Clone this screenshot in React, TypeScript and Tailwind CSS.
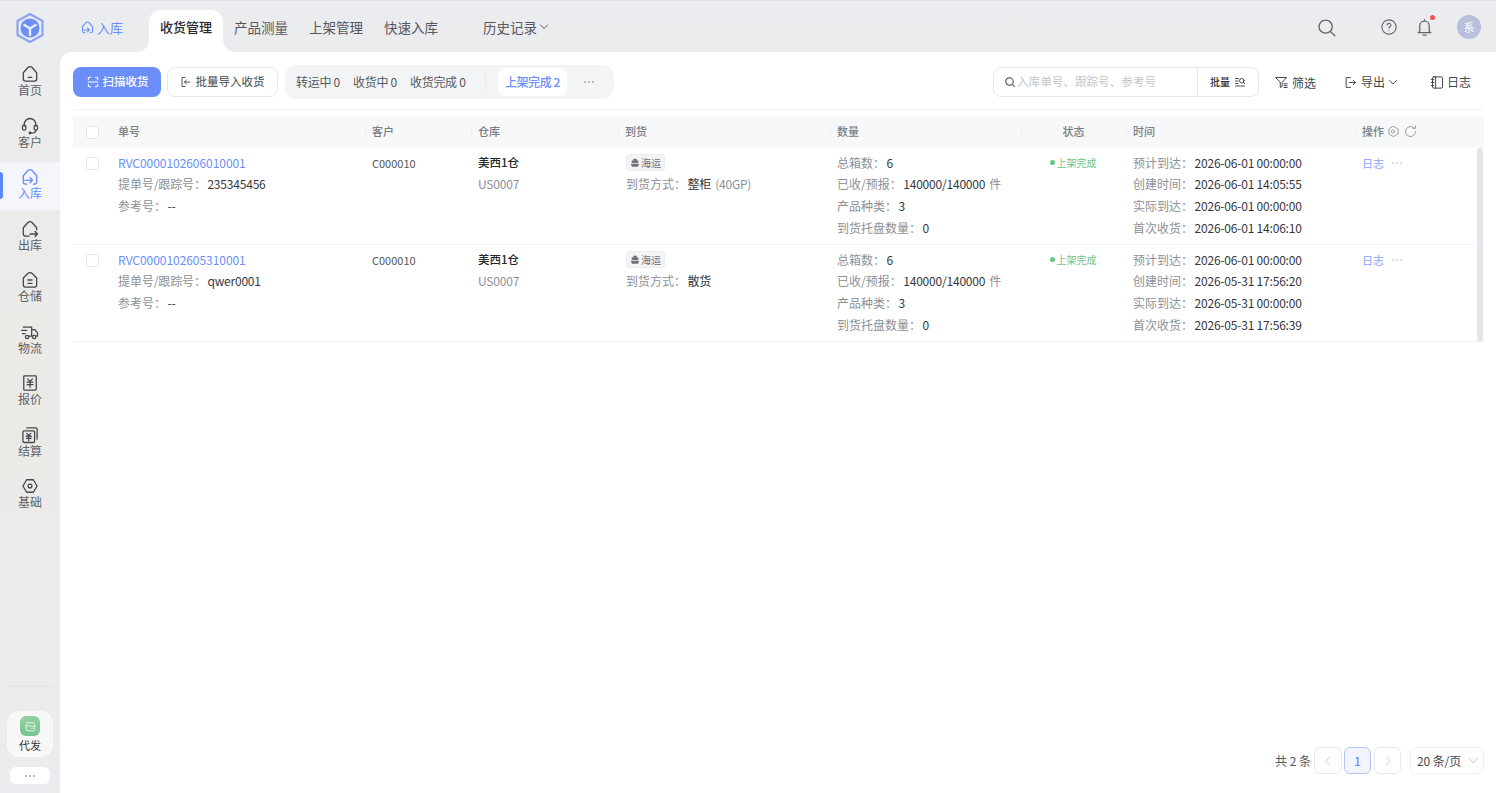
import React from "react";

const S = (p: { s?: number; w?: number; c?: string; children: React.ReactNode; vb?: string }) => (
  <svg width={p.s ?? 16} height={p.s ?? 16} viewBox={p.vb ?? "0 0 24 24"} fill="none" stroke={p.c ?? "currentColor"} strokeWidth={p.w ?? 1.8} strokeLinecap="round" strokeLinejoin="round" className="shrink-0">
    {p.children}
  </svg>
);

const Dots = ({ c = "#7d8085" }: { c?: string }) => (
  <svg width="10" height="4" viewBox="0 0 10 4" fill={c} className="shrink-0">
    <circle cx="1" cy="2" r="0.8" /><circle cx="5" cy="2" r="0.8" /><circle cx="9" cy="2" r="0.8" />
  </svg>
);

const navItems: { label: string; active?: boolean; icon: React.ReactNode }[] = [
  { label: "首页", icon: <S s={20} w={1.55}><path d="M4 10.500 9.500 4.200a3.400 3.400 0 0 1 5 0l5.500 6.300V18a2.500 2.500 0 0 1-2.500 2.500h-11A2.500 2.500 0 0 1 4 18z" /><path d="M10 16h4" /></S> },
  { label: "客户", icon: <S s={20} w={1.55}><path d="M5 12V10a7 7 0 0 1 14 0v2" /><rect x="3" y="11" width="4" height="6" rx="2" /><rect x="17" y="11" width="4" height="6" rx="2" /><path d="M19 17c0 2.300-2.500 3.500-5.500 3.500" /><circle cx="12" cy="20.500" r="1" /></S> },
  { label: "入库", active: true, icon: <S s={20} w={1.7}><path d="M8 20.500H6.500A2.500 2.500 0 0 1 4 18v-7.500l5.500-6.300a3.400 3.400 0 0 1 5 0l5.500 6.300V18a2.500 2.500 0 0 1-2.500 2.500H16" /><path d="M6 16h9M12 13l3 3-3 3" /></S> },
  { label: "出库", icon: <S s={20} w={1.55}><path d="M11 20.500H6.500A2.500 2.500 0 0 1 4 18v-7.500l5.500-6.300a3.400 3.400 0 0 1 5 0l5.500 6.300V13" /><path d="M12 18h9M18 15l3 3-3 3" /></S> },
  { label: "仓储", icon: <S s={20} w={1.55}><path d="M4 9.500 9 4.600a4 4 0 0 1 6 0l5 4.900V18a2.500 2.500 0 0 1-2.500 2.500h-11A2.500 2.500 0 0 1 4 18z" /><path d="M9.500 12h5M9.500 16h5" /></S> },
  { label: "物流", icon: <S s={20} w={1.5}><path d="M4 6h10v11h-3M14 9h3.500l3.500 4v4h-2M2 10h6M3 14h3" /><circle cx="8.500" cy="18" r="2" /><circle cx="17" cy="18" r="2" /></S> },
  { label: "报价", icon: <S s={20} w={1.55}><rect x="4.500" y="3.500" width="15" height="17" rx="1" /><path d="m9 7 3 3 3-3M8.500 11h7M8.500 14h7M12 10v7" /></S> },
  { label: "结算", icon: <S s={20} w={1.55}><path d="M8 3.500h11a1.500 1.500 0 0 1 1.500 1.500v12" /><rect x="3.500" y="7" width="14" height="14" rx="1.500" /><path d="m8 10 2.500 2.500L13 10M7.500 13.500h6M7.500 16h6M10.500 12.500V19" /></S> },
  { label: "基础", icon: <S s={20} w={1.55}><path d="M8 4.500h8l4.500 7.500-4.500 7.500H8L3.500 12z" /><circle cx="12" cy="12" r="2.300" /></S> },
];

function Sidebar() {
  return (
    <aside className="flex h-full w-[60px] shrink-0 flex-col">
      <div className="flex h-[58px] shrink-0 items-start justify-center pt-[11px]">
        <svg width="30" height="32" viewBox="0 0 30 32" fill="none">
          <path d="M15 2 27.500 9v14L15 30 2.500 23V9z" stroke="#8aa5f6" strokeWidth="2.200" strokeLinejoin="round" />
          <circle cx="15" cy="16" r="9.500" fill="#6c8ff5" />
          <path d="M15 16.500V24M15 16.500 8.500 12.500M15 16.500l6.500-4" stroke="#e9ecf6" strokeWidth="2.400" />
        </svg>
      </div>
      <nav className="flex flex-col gap-[3.5px]">
        {navItems.map((n) => (
          <div key={n.label} className={`relative flex h-[48px] flex-col items-center pt-[5px] text-xs leading-4 ${n.active ? "bg-[#f5f6fb] text-[#6a8efb]" : "text-[#5f6267]"}`}>
            {n.active && <span className="absolute left-0 top-[10px] h-[27px] w-[3px] rounded-r bg-[#5f85fb]" />}
            <span className={n.active ? "" : "text-[#44474c]"}>{n.icon}</span>
            <span className="-mt-[2px]">{n.label}</span>
          </div>
        ))}
      </nav>
      <div className="mt-auto flex flex-col items-center pb-[9px]">
        <div className="mb-[24px] h-px w-[46px] bg-[#e3e3e0]" />
        <div className="flex h-[46px] w-[46px] flex-col items-center rounded-xl bg-[#f8f8f8] pt-[5px]">
          <span className="flex h-5 w-5 items-center justify-center rounded-md bg-gradient-to-b from-[#8fd3a0] to-[#76c48d]">
            <S s={13} c="#eaf7ee" w={1.7}><rect x="4" y="5" width="16" height="15" rx="3" /><path d="M4 11h16M14 15h3" /></S>
          </span>
          <span className="mt-0 text-[11px] leading-[18px] text-[#33363c]">代发</span>
        </div>
        <div className="mt-[10px] flex h-[17px] w-10 items-center justify-center rounded-md bg-white"><Dots c="#666a70" /></div>
      </div>
    </aside>
  );
}

function TopBar() {
  const tabs = ["产品测量", "上架管理", "快速入库"];
  return (
    <header className="flex h-[51px] shrink-0 items-end pr-[15px] text-[13.5px]">
      <div className="mb-[15px] ml-[20px] flex w-[69px] items-center gap-[2px] text-[13px] text-[#6a8efb]">
        <S s={15} w={1.7}><path d="M8 20.500H6.500A2.500 2.500 0 0 1 4 18v-7.500l5.500-6.300a3.400 3.400 0 0 1 5 0l5.500 6.300V18a2.500 2.500 0 0 1-2.500 2.500H16" /><path d="M6 16h9M12 13l3 3-3 3" /></S>
        <span>入库</span>
      </div>
      <div className="relative flex h-[42px] w-[74px] items-center justify-center rounded-t-xl bg-white pb-[8px] text-[13px] font-medium text-[#26282c]">
        <span className="absolute -left-3 bottom-0 h-3 w-3 bg-white"><span className="block h-3 w-3 rounded-br-xl bg-[#ebecef]" /></span>
        <span className="absolute -right-3 bottom-0 h-3 w-3 bg-white"><span className="block h-3 w-3 rounded-bl-xl bg-[#ebecef]" /></span>
        收货管理
      </div>
      <div className="ml-[11px] flex h-[42px] items-center gap-[21px] whitespace-nowrap pb-[8px] text-[#55585d]">
        {tabs.map((t) => <span key={t}>{t}</span>)}
        <span className="ml-[24px] flex items-center gap-[1px]">历史记录
          <S s={12} w={2}><path d="m5 8 7 7 7-7" /></S>
        </span>
      </div>
      <div className="mb-[13px] ml-auto flex items-center text-[#63666b]">
        <S s={21} w={1.55}><circle cx="11" cy="11" r="7.500" /><path d="m17 17 4.500 4.500" /></S>
        <span className="ml-[43px]"><S s={18} w={1.5}><circle cx="12" cy="12" r="9.500" /><path d="M9.500 9.500a2.500 2.500 0 1 1 3.600 2.200c-.8.500-1.100 1-1.100 1.800M12 17h.01" /></S></span>
        <span className="relative ml-[17px]">
          <S s={19} w={1.6}><path d="M6 17V10a6 6 0 0 1 12 0v7l2 1.500H4zM10 21.500h4M12 2v2" /></S>
          <span className="absolute -right-px -top-[3px] h-[5px] w-[5px] rounded-full bg-[#f0544f]" />
        </span>
        <span className="ml-[23px] flex h-6 w-6 items-center justify-center rounded-full bg-[#b9bfdb] text-[11px] text-white">系</span>
      </div>
    </header>
  );
}

function Toolbar() {
  return (
    <div className="flex h-[43px] shrink-0 items-start whitespace-nowrap border-b border-[#f3f4f6] text-xs">
      <button className="flex h-[30px] w-[88px] shrink-0 items-center justify-center gap-[3px] rounded-lg bg-[#6b8efb] text-[11.5px] font-medium text-white">
        <S s={14} w={1.8}><path d="M4 8V6a2 2 0 0 1 2-2h2M16 4h2a2 2 0 0 1 2 2v2M20 16v2a2 2 0 0 1-2 2h-2M8 20H6a2 2 0 0 1-2-2v-2M4 12h16" /></S>
        扫描收货
      </button>
      <button className="ml-[6px] flex h-[30px] w-[111px] shrink-0 items-center justify-center gap-[4px] rounded-lg border border-[#e7e8eb] pr-[1px] text-[11.5px] text-[#44474c]">
        <S s={12} w={1.8}><path d="M10 3H4v18h6M20 12H9M13 8l-4 4 4 4" /></S>
        批量导入收货
      </button>
      <div className="-mt-[2px] ml-[7px] flex h-[34px] w-[329px] shrink-0 items-center rounded-xl bg-[#f3f4f6] pl-[11px] text-[#55585d]">
        <span className="w-[43px] tracking-[-0.3px]">转运中 0</span>
        <span className="ml-[14px] w-[43px] tracking-[-0.3px]">收货中 0</span>
        <span className="ml-[14px] w-[55px] tracking-[-0.3px]">收货完成 0</span>
        <span className="ml-[20px] h-[18px] w-px bg-[#e8e9ec]" />
        <span className="ml-[12px] flex h-[28px] w-[69px] items-center justify-center rounded-lg bg-white font-medium tracking-[-0.4px] text-[#6a8efb]">上架完成 2</span>
        <span className="ml-[17px]"><Dots c="#74777c" /></span>
      </div>
      <div className="ml-auto flex h-[30px] w-[266px] shrink-0 items-center rounded-lg border border-[#e7e8eb]">
        <span className="ml-[10px] text-[#44474c]"><S s={12} w={2.1}><circle cx="11" cy="11" r="7.500" /><path d="m17 17 4 4" /></S></span>
        <span className="w-[181px] pl-[1px] text-[11.6px] text-[#c4c6cb]">入库单号、跟踪号、参考号</span>
        <span className="flex h-full flex-1 items-center justify-center gap-[4px] border-l border-[#e7e8eb] text-[10px] font-medium text-[#2e3035]">批量
          <S s={12} w={1.7}><path d="M3 5h6M3 10h5M3 15h5M3 20h18" /><circle cx="15.500" cy="9.500" r="4.500" /><path d="m19 13 2.500 2.500" /></S>
        </span>
      </div>
      <div className="ml-[15px] flex h-[30px] items-center gap-[3px] text-[#44474c]">
        <S s={15} w={1.6}><path d="M3 4h17l-7 8v6l-3 2v-8zM16 14h5M16 17h5M16 20h5" /></S>
        <span className="mt-px">筛选</span>
      </div>
      <div className="ml-[28px] flex h-[30px] items-center gap-[4px] text-[#44474c]">
        <S s={13} w={1.8}><path d="M12 3H4v18h8M10 12h11M17 8l4 4-4 4" /></S>
        <span>导出</span>
        <span className="-ml-[2px]"><S s={12} w={1.8}><path d="m5 9 7 7 7-7" /></S></span>
      </div>
      <div className="ml-[31px] mr-[13px] flex h-[30px] items-center gap-[2px] text-[#44474c]">
        <S s={15} w={1.6}><rect x="4" y="3" width="16" height="18" rx="2" /><path d="M9 3v18M2 7h4M2 12h4M2 17h4" /></S>
        <span>日志</span>
      </div>
    </div>
  );
}

const cols = "grid grid-cols-[37px_255px_106px_147px_212px_191px_105px_229px_129px]";

function Head({ t, center, children }: { t: string; center?: boolean; children?: React.ReactNode }) {
  return (
    <div className={`relative flex items-center pb-[2px] font-medium text-[#7a7d82] ${center ? "justify-center" : "pl-[7px]"}`}>
      <span className="absolute left-0 top-[9px] h-[14px] w-px bg-[#eff0f3]" />
      <span>{t}</span>
      {children}
    </div>
  );
}

const Checkbox = () => <span className="block h-[13px] w-[13px] rounded-[3px] border border-[#e7e8eb] bg-white" />;

const Line = ({ l, v, extra, tight }: { l: string; v: string; extra?: string; tight?: boolean }) => (
  <div className="flex h-[21.67px] items-center whitespace-nowrap">
    <span className={`text-[#8d9096] ${tight ? "tracking-[-0.1px]" : ""}`}>{l}</span>
    <span className="ml-[1.500px] tracking-[-0.2px] text-[#35373c]">{v}</span>
    {extra && <span className="ml-1 tracking-[-0.2px] text-[#8d9096]">{extra}</span>}
  </div>
);

type Row = { id: string; track: string; mode: string; extra?: string; t: string[] };
const rows: Row[] = [
  { id: "RVC0000102606010001", track: "235345456", mode: "整柜", extra: "(40GP)", t: ["2026-06-01 00:00:00", "2026-06-01 14:05:55", "2026-06-01 00:00:00", "2026-06-01 14:06:10"] },
  { id: "RVC0000102605310001", track: "qwer0001", mode: "散货", t: ["2026-06-01 00:00:00", "2026-05-31 17:56:20", "2026-05-31 00:00:00", "2026-05-31 17:56:39"] },
];

function TableRow({ r }: { r: Row }) {
  return (
    <div className={`${cols} h-[97px] border-b border-[#f2f3f5] pt-[4px]`}>
      <div className="flex justify-center pl-px pt-[5px]"><Checkbox /></div>
      <div className="pl-[8px]">
        <div className="flex h-[21.67px] items-center tracking-[-0.05px] text-[#6a8efb]">{r.id}</div>
        <Line l="提单号/跟踪号：" v={r.track} tight />
        <Line l="参考号：" v="--" />
      </div>
      <div className="pl-[7px]"><div className="flex h-[21.67px] items-center text-[11px] text-[#55585d]">C000010</div></div>
      <div className="pl-[7px]">
        <div className="flex h-[21.67px] items-center text-[11.5px] font-medium text-[#26282c]">美西1仓</div>
        <div className="flex h-[21.67px] items-center tracking-[-0.2px] text-[#8d9096]">US0007</div>
      </div>
      <div className="pl-[8px]">
        <div className="flex h-[21.67px] items-center">
          <span className="flex h-[17px] items-center gap-[1px] rounded-[3px] border border-[#ebecef] bg-[#f3f4f6] px-[3px] text-[10px] text-[#6e7176]">
            <svg width="10" height="10" viewBox="0 0 12 12" fill="#6e7176"><path d="M4 1h4v2h2v3H2V3h2zM1 7h10l-1.300 3.500H2.300z" /></svg>
            海运
          </span>
        </div>
        <Line l="到货方式：" v={r.mode} extra={r.extra} />
      </div>
      <div className="pl-[7px]">
        <Line l="总箱数：" v="6" />
        <Line l="已收/预报：" v="140000/140000" extra="件" />
        <Line l="产品种类：" v="3" />
        <Line l="到货托盘数量：" v="0" />
      </div>
      <div className="flex h-[21.67px] items-center justify-center pr-[1px] text-[10px] text-[#6cc38a]">
        <span className="mr-[2px] h-[5px] w-[5px] rounded-full bg-[#6cc38a]" />上架完成
      </div>
      <div className="pl-[7px]">
        {["预计到达：", "创建时间：", "实际到达：", "首次收货："].map((l, i) => <Line key={l} l={l} v={r.t[i]} />)}
      </div>
      <div className="flex h-[21.67px] items-center pl-[7px] text-[11px] text-[#88a4f8]">
        日志<span className="ml-[8px]"><Dots c="#9db3f8" /></span>
      </div>
    </div>
  );
}

function Table() {
  return (
    <div className="relative mt-[6px] text-xs">
      <div className={`${cols} h-[32px] bg-[#f7f8fa] text-[11px]`}>
        <div className="flex items-center justify-center pl-px"><Checkbox /></div>
        <div className="flex items-center pb-[2px] pl-[8px] font-medium text-[#7a7d82]">单号</div>
        <Head t="客户" />
        <Head t="仓库" />
        <Head t="到货" />
        <Head t="数量" />
        <Head t="状态" center />
        <Head t="时间" />
        <Head t="操作">
          <span className="ml-[3px] text-[#8a8d92]"><S s={13} w={1.5}><path d="M12 2.500 20.500 7.500v9L12 21.500 3.500 16.500v-9z" /><circle cx="11" cy="12" r="3" /></S></span>
          <span className="ml-[3px] text-[#8a8d92]"><S s={15} w={1.4}><path d="M20 12a8 8 0 1 1-2.500-5.800M20 3v4h-4" /></S></span>
        </Head>
      </div>
      {rows.map((r) => <TableRow key={r.id} r={r} />)}
      <span className="absolute right-[1px] top-[32px] h-[194px] w-[6px] rounded-full bg-[#e4e6ec]" />
    </div>
  );
}

function Pagination() {
  const box = "flex h-[27px] items-center rounded-md border";
  return (
    <div className="mt-auto flex items-center justify-end pb-[19px] text-xs text-[#55585d]">
      <span>共 2 条</span>
      <span className={`${box} ml-[3px] w-[28px] justify-center border-[#e7e8eb] text-[#bfc1c6]`}><S s={14} w={1.5}><path d="m15 5-7 7 7 7" /></S></span>
      <span className={`${box} ml-[2px] w-[27px] justify-center border-[#b4c6fb] bg-[#f2f5fe] font-medium text-[#6a8efb]`}>1</span>
      <span className={`${box} ml-[3px] w-[27px] justify-center border-[#e7e8eb] text-[#bfc1c6]`}><S s={14} w={1.5}><path d="m9 5 7 7-7 7" /></S></span>
      <span className={`${box} ml-[9px] w-[74px] justify-between border-[#eeeff1] pl-[6px] pr-[2px] tracking-[-0.1px] text-[#44474c]`}>
        20 条/页
        <span className="text-[#bfc1c6]"><S s={15} w={1.4}><path d="m5 8 7 8 7-8" /></S></span>
      </span>
    </div>
  );
}

export default function App() {
  return (
    <div className="flex h-screen w-full overflow-hidden border-t border-[#e2e3e5] bg-gradient-to-b from-[#ebecef] via-[#ebeae6] to-[#eaecef]" style={{ fontFamily: '"Noto Sans CJK SC", "Noto Sans", sans-serif' }}>
      <Sidebar />
      <div className="flex min-w-0 flex-1 flex-col">
        <TopBar />
        <main className="flex min-h-0 flex-1 flex-col rounded-tl-xl bg-white pl-[13px] pr-[12px] pt-[15px]">
          <Toolbar />
          <Table />
          <Pagination />
        </main>
      </div>
    </div>
  );
}
